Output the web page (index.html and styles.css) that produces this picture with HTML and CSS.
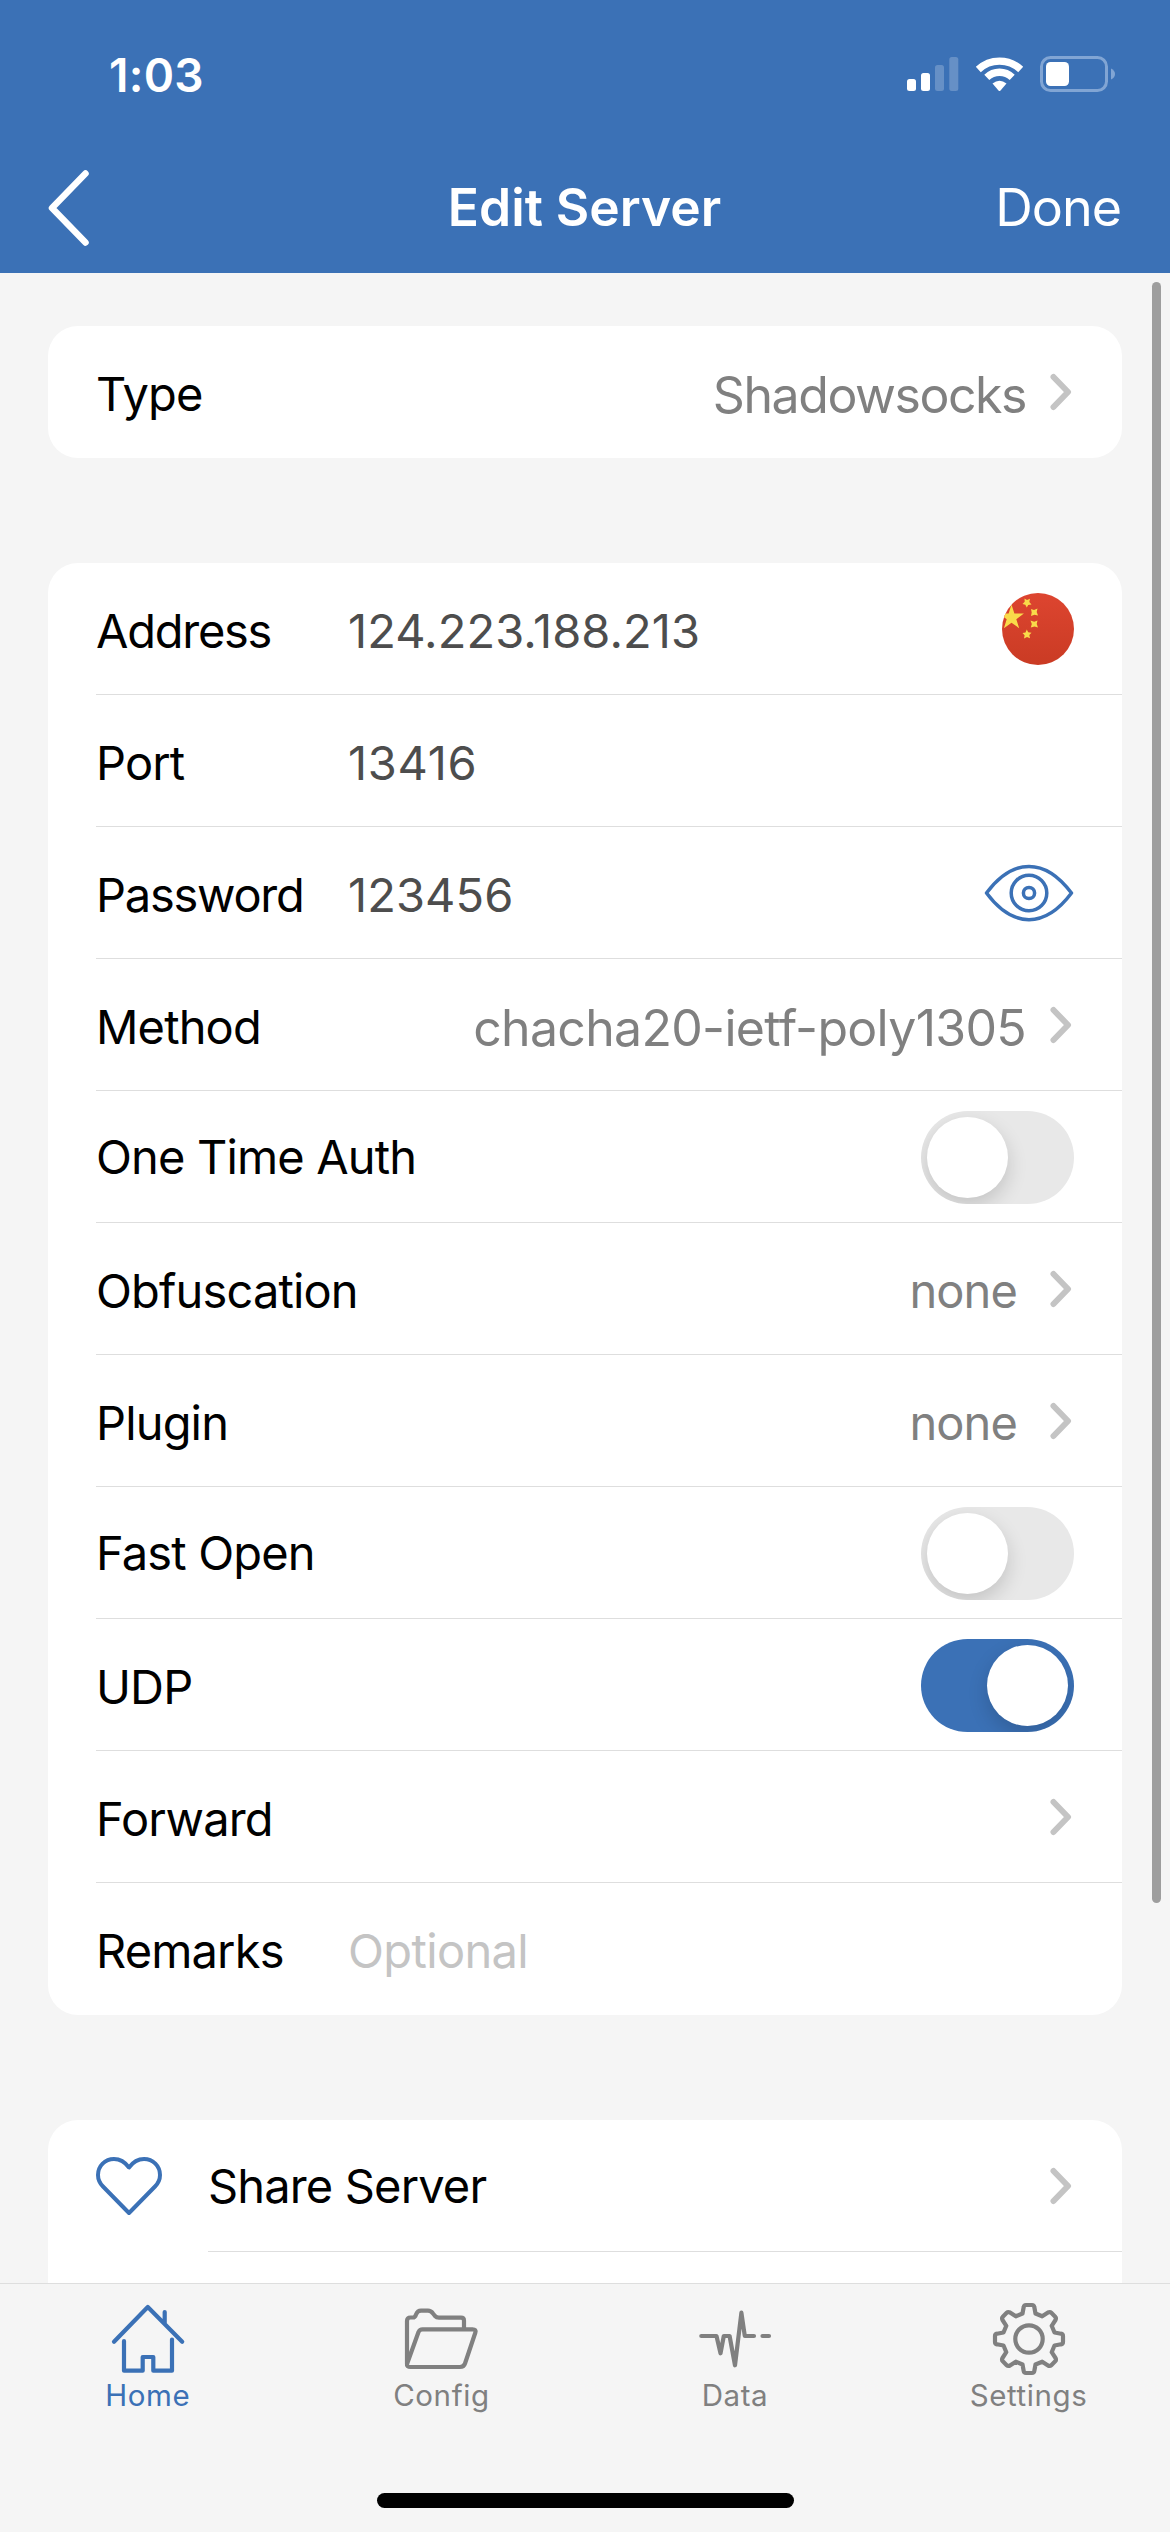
FILE: index.html
```html
<!DOCTYPE html>
<html lang="en">
<head>
<meta charset="utf-8">
<title>Edit Server</title>
<link rel="stylesheet" href="styles.css">
</head>
<body>
<svg class="defs" aria-hidden="true">
  <symbol id="chevron" viewBox="0 0 22 38"><path d="M3.5 4 18 19 3.5 34" fill="none" stroke="#c4c4c4" stroke-width="6" stroke-linecap="round" stroke-linejoin="round"/></symbol>
</svg>

<header class="header">
  <div class="status">
    <span class="time">1:03</span>
    <div class="status-icons">
      <svg width="52" height="38" viewBox="0 0 52 38" fill="#fff">
        <rect x="0" y="25" width="9" height="12" rx="2.5"/>
        <rect x="14" y="19" width="9" height="18" rx="2.5"/>
        <rect x="28" y="11" width="9" height="26" rx="2.5" opacity=".22"/>
        <rect x="42.300" y="3" width="9" height="34" rx="2.500" opacity=".22"/>
      </svg>
      <svg width="49" height="38" viewBox="0 0 49 38">
        <path d="M3.300 15.500A31 31 0 0 1 45.700 15.500M11.800 23.300A18.500 18.500 0 0 1 37.200 23.300" fill="none" stroke="#fff" stroke-width="7.300"/>
        <path d="M17.500 29.500Q24.500 24 31.500 29.500L25.500 36.500Q24.500 37.500 23.500 36.500Z" fill="#fff"/>
      </svg>
      <svg width="76" height="38" viewBox="0 0 76 38">
        <rect x="1.500" y="3.500" width="65" height="33" rx="9" fill="none" stroke="#81a5d4" stroke-width="3"/>
        <rect x="6" y="8" width="23" height="24" rx="4.500" fill="#fff"/>
        <path d="M71 14.500Q75 16.500 75 20Q75 23.500 71 25.500Z" fill="#81a5d4"/>
      </svg>
    </div>
  </div>
  <nav class="nav">
    <svg class="back" width="44" height="78" viewBox="0 0 44 78"><path d="M37.500 4.500 4 39 37.500 73.500" fill="none" stroke="#fff" stroke-width="6.500" stroke-linecap="round" stroke-linejoin="round"/></svg>
    <h1 class="title">Edit Server</h1>
    <span class="done">Done</span>
  </nav>
</header>

<main class="content">
  <section class="card">
    <div class="row"><span class="label">Type</span><span class="detail">Shadowsocks</span><svg class="chev"><use href="#chevron"/></svg></div>
  </section>

  <section class="card">
    <div class="row"><span class="label tight">Address</span><span class="value">124.223.188.213</span>
      <svg class="flag" width="72" height="72" viewBox="0 0 72 72">
        <defs>
          <clipPath id="round"><circle cx="36" cy="36" r="36"/></clipPath>
          <linearGradient id="red" x2="0" y2="1"><stop offset="0" stop-color="#dd4530"/><stop offset="1" stop-color="#ca3b24"/></linearGradient>
        </defs>
        <g clip-path="url(#round)">
          <rect width="72" height="72" fill="url(#red)"/>
          <g fill="#f9db4a">
            <path d="M9.500 11.500 12.400 20.500H21.900L14.300 26.200 17.200 35.200 9.500 29.700 1.900 35.200 4.700 26.200-2.900 20.500H6.600Z"/>
            <path d="M22.500 5.500 25 7 28 5.800 27.300 9 29.500 11.500 26.200 12 24.800 14.500 23.300 11.700 20.500 11 22.700 8.700Z"/>
            <path d="M29 16 32 17 35.500 15.500 34.700 19 36 22.500 32.500 21.800 29 23 29.700 19.500Z"/>
            <path d="M28.500 27.500 32.200 28.800 35.500 27.500 34.700 31 36 34.500 32.500 33.500 28.800 34.500 29.800 31Z"/>
            <path d="M24.800 36.500 26.200 39.300 29.500 39.800 27.300 42 28 45.300 25 44 22 45.600 22.600 42.300 20.500 40 23.500 39.500Z"/>
          </g>
        </g>
      </svg>
    </div>
    <div class="row"><span class="label">Port</span><span class="value port">13416</span></div>
    <div class="row"><span class="label tight">Password</span><span class="value">123456</span>
      <svg width="90" height="60" viewBox="0 0 90 60" fill="none" stroke="#3b71b6" stroke-width="3.500" stroke-linejoin="round">
        <path d="M2.500 30C29-5.500 61-5.500 87.500 30C61 65.500 29 65.500 2.500 30Z"/>
        <circle cx="45" cy="30" r="17.800"/><circle cx="45" cy="30" r="5.600"/>
      </svg>
    </div>
    <div class="row"><span class="label">Method</span><span class="detail method">chacha20-ietf-poly1305</span><svg class="chev"><use href="#chevron"/></svg></div>
    <div class="row"><span class="label raised">One Time Auth</span><span class="switch"><i class="knob"></i></span></div>
    <div class="row"><span class="label">Obfuscation</span><span class="detail small">none</span><svg class="chev"><use href="#chevron"/></svg></div>
    <div class="row"><span class="label">Plugin</span><span class="detail small">none</span><svg class="chev"><use href="#chevron"/></svg></div>
    <div class="row"><span class="label raised">Fast Open</span><span class="switch"><i class="knob"></i></span></div>
    <div class="row"><span class="label">UDP</span><span class="switch on"><i class="knob"></i></span></div>
    <div class="row"><span class="label">Forward</span><svg class="chev"><use href="#chevron"/></svg></div>
    <div class="row"><span class="label">Remarks</span><span class="value placeholder">Optional</span></div>
  </section>

  <section class="card">
    <div class="row share">
      <svg width="66" height="60" viewBox="2 3 66 60" fill="none" stroke="#3b71b6" stroke-width="4" stroke-linejoin="round"><path d="M35 14.500C31 9 26 6 20 6C11 6 4 13 4 22C4 27 6 30.500 9 33.500L35 60 61 33.500C64 30.500 66 27 66 22C66 13 59 6 50 6C44 6 39 9 35 14.500Z"/></svg>
      <span class="label raised">Share Server</span><svg class="chev"><use href="#chevron"/></svg>
    </div>
    <div class="row"></div>
  </section>
  <div class="scrollbar"></div>
</main>

<footer class="tabbar">
  <div class="tab active">
    <svg viewBox="0 0 72 72"><path d="M2 38.700 35.800 4 70.200 38.700M52.700 9V20M12 38V67.700H30.700V54H41.300V67.700H60V36.500"/></svg>
    <span class="tab-label">Home</span>
  </div>
  <div class="tab">
    <svg viewBox="2 0 72 72"><path d="M4 61V18Q4 14.500 7.500 14.500H10Q12 14.500 13 11.500Q14.500 7.700 18 7.700H25Q28 7.700 30 10.500L32 13Q33.500 14.700 36 14.700H58Q61 14.700 61 17.700V26M4 61 15.500 29Q16.700 26.300 19.500 26.300H69.500Q73.500 26.300 72.300 29.800L62 60.500Q60.800 64 57 64H7.500Q3.500 64 4 61Z"/></svg>
    <span class="tab-label">Config</span>
  </div>
  <div class="tab">
    <svg viewBox="0 0 72 72"><path d="M2.300 33H17.500L21.500 50.300 24.800 33H30.600L36 62.300 42.400 9.700 45.800 33H55M63.500 33H70"/></svg>
    <span class="tab-label">Data</span>
  </div>
  <div class="tab">
    <svg viewBox="0 0 72 72"><path d="M33 2H39Q41 2 41.300 4L42.500 10.500 49.200 13.300 55 9.500Q57 8.500 58.300 9.800L62.200 13.700Q63.500 15 62.500 17L58.700 22.800 61.500 29.500 68 30.700Q70 31 70 33V39Q70 41 68 41.300L61.500 42.500 58.700 49.200 62.500 55Q63.500 57 62.200 58.300L58.300 62.200Q57 63.500 55 62.500L49.200 58.700 42.500 61.500 41.300 68Q41 70 39 70H33Q31 70 30.700 68L29.500 61.500 22.800 58.700 17 62.500Q15 63.500 13.700 62.200L9.800 58.300Q8.500 57 9.500 55L13.300 49.200 10.500 42.500 4 41.300Q2 41 2 39V33Q2 31 4 30.700L10.500 29.500 13.300 22.800 9.500 17Q8.500 15 9.800 13.700L13.700 9.800Q15 8.500 17 9.500L22.800 13.300 29.500 10.500 30.700 4Q31 2 33 2Z"/><circle cx="36" cy="36" r="13.700"/></svg>
    <span class="tab-label">Settings</span>
  </div>
  <div class="home-indicator"></div>
</footer>
</body>
</html>
```
FILE: styles.css
```css
* { box-sizing: border-box; }

body {
  margin: 0;
  width: 1170px;
  height: 2532px;
  display: flex;
  flex-direction: column;
  overflow: hidden;
  background: #f5f5f5;
  color: #000;
  font-family: Inter, "Liberation Sans", sans-serif;
  -webkit-font-smoothing: antialiased;
}

svg { display: block; flex: none; }
.defs { position: absolute; width: 0; height: 0; }

/* Header */
.header {
  height: 273px;
  flex: none;
  background: #3b71b6;
  color: #fff;
}
.status {
  height: 146px;
  padding: 0 54px 0 109px;
  display: flex;
  justify-content: space-between;
}
.time {
  padding-top: 48px;
  font-size: 46px;
  line-height: 54px;
  font-weight: 600;
  letter-spacing: .3px;
}
.status-icons {
  padding-top: 54px;
  display: flex;
  gap: 16px;
}
.nav {
  height: 124px;
  padding: 0 49px 0 48px;
  display: grid;
  grid-template-columns: 1fr auto 1fr;
  align-items: center;
}
.title {
  margin: 0;
  padding-bottom: 2px;
  font-size: 51.5px;
  line-height: 62px;
  font-weight: 600;
}
.done {
  justify-self: end;
  font-size: 52px;
  line-height: 62px;
  letter-spacing: -1px;
}

/* Grouped list */
.content {
  position: relative;
  flex: 1;
  min-height: 0;
  overflow: hidden;
  padding: 53px 48px 0;
  display: flex;
  flex-direction: column;
  gap: 105px;
}
.card {
  flex: none;
  overflow: hidden;
  border-radius: 30px;
  background: #fff;
}
.row {
  position: relative;
  height: 132px;
  padding: 0 48px;
  display: flex;
  align-items: center;
}
.row:not(:last-child)::after {
  content: "";
  position: absolute;
  left: 48px;
  right: 0;
  bottom: 0;
  height: 1px;
  background: #dedede;
}
.row.share::after { left: 160px; }
.row > svg:last-child,
.switch { margin-left: auto; }
.label {
  width: 252px;
  padding-top: 3px;
  font-size: 47px;
  letter-spacing: -.85px;
  white-space: nowrap;
}
.label.tight { letter-spacing: -1.25px; }
.label.raised { padding: 0 0 2px; }
.share .label { margin-left: 46px; }
.value {
  padding-top: 3px;
  font-size: 47px;
  letter-spacing: .1px;
  color: #4d4d4d;
}
.value.port { letter-spacing: .7px; }
.value.placeholder {
  letter-spacing: -.65px;
  color: #c4c4c4;
}
.detail {
  margin-left: auto;
  padding: 5px 24px 0 0;
  font-size: 50px;
  letter-spacing: -1.45px;
  color: #808080;
}
.detail.method { letter-spacing: -.7px; }
.detail.small {
  padding: 3px 33px 0 0;
  font-size: 47px;
  letter-spacing: -.9px;
}
.row > .chev {
  width: 22px;
  height: 38px;
  margin-right: 2px;
}
.row > .detail + .chev:last-child { margin-left: 0; }

.switch {
  width: 153px;
  height: 93px;
  padding: 6px;
  display: flex;
  border-radius: 47px;
  overflow: hidden;
  background: #e8e8e8;
}
.switch.on {
  justify-content: flex-end;
  background: #3b71b6;
}
.knob {
  width: 81px;
  height: 81px;
  border-radius: 50%;
  background: #fff;
  box-shadow: 0 8px 20px rgba(0, 0, 0, .16);
}

.scrollbar {
  position: absolute;
  top: 9px;
  right: 9px;
  width: 9px;
  height: 1621px;
  border-radius: 5px;
  background: #9e9e9e;
}

/* Tab bar */
.tabbar {
  position: relative;
  height: 249px;
  flex: none;
  padding: 19px 0 0 1px;
  display: grid;
  grid-template-columns: repeat(4, 293.6px);
  align-items: start;
  border-top: 1px solid #dedede;
  background: #f5f5f5;
}
.tab {
  display: flex;
  flex-direction: column;
  align-items: center;
  gap: 2px;
  color: #808080;
}
.tab.active { color: #3b71b6; }
.tab svg {
  width: 72px;
  height: 72px;
  overflow: visible;
  fill: none;
  stroke: currentColor;
  stroke-width: 4.2;
  stroke-linecap: round;
  stroke-linejoin: round;
}
.tab-label {
  font-size: 29.5px;
  line-height: 36px;
  letter-spacing: .6px;
}
.home-indicator {
  position: absolute;
  left: 377px;
  bottom: 24px;
  width: 417px;
  height: 15px;
  border-radius: 8px;
  background: #000;
}
```
